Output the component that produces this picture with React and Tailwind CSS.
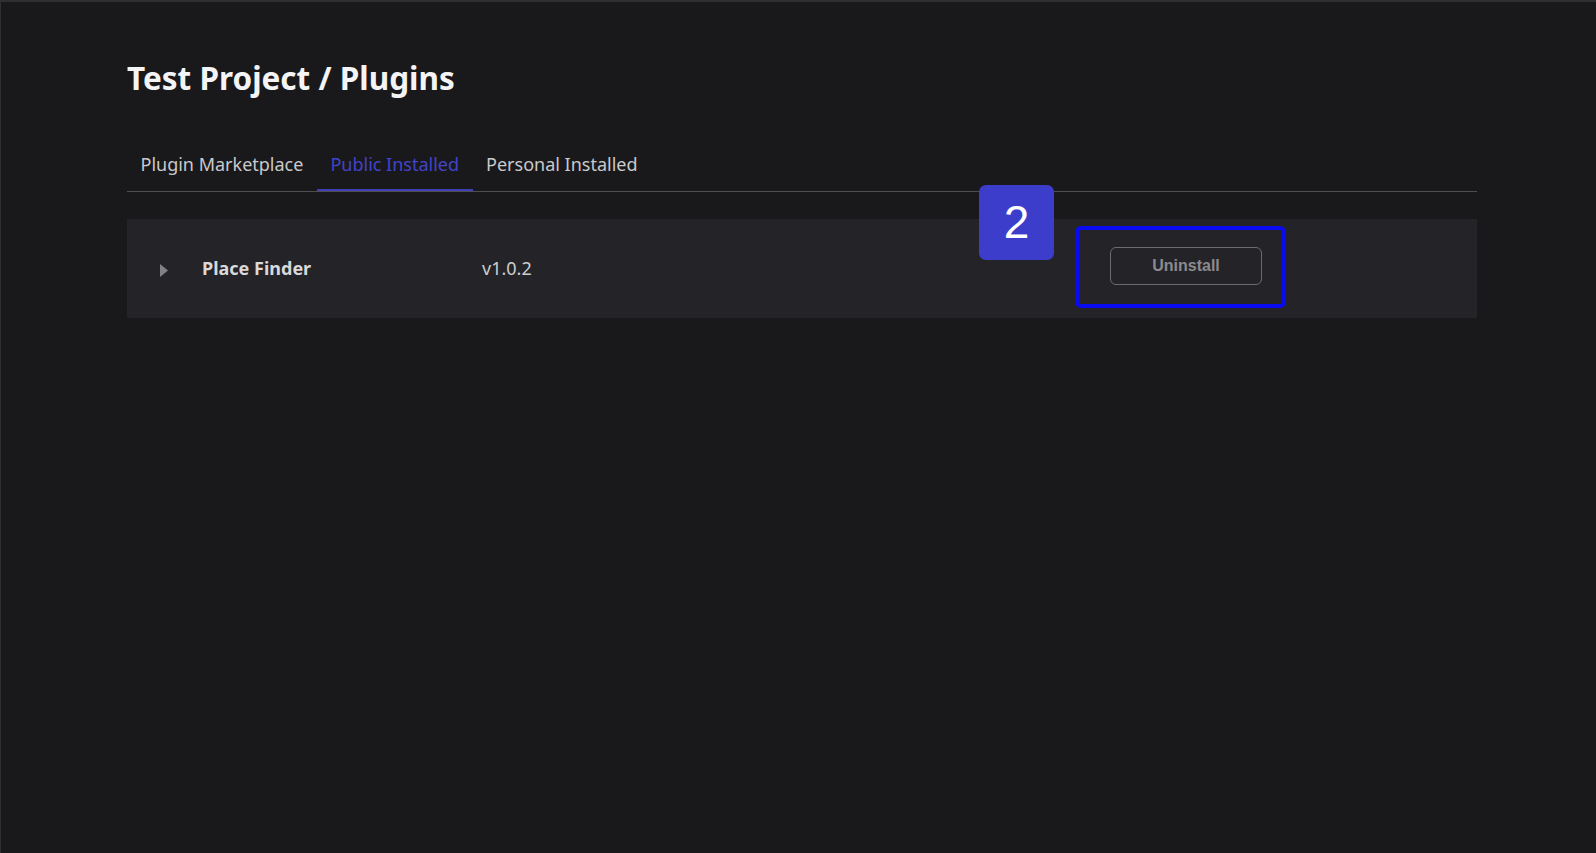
import { useState } from "react";

const tabs = ["Plugin Marketplace", "Public Installed", "Personal Installed"];

function App() {
  const [active, setActive] = useState(1);

  return (
    <div className="h-screen w-full overflow-hidden bg-[#19191b] border-t-2 border-l border-[#2f2f32] font-['Noto_Sans',sans-serif]">

      <div className="ml-[126px] w-[1350px] pt-[56px]">

        {/* HEADER */}

        <h1 className="text-[31.5px] leading-[40px] font-bold text-[#f4f4f6]">
          Test Project / Plugins
        </h1>

        {/* TABS */}

        <div className="mt-[45px] flex border-b border-[#4d4d52]">
          {tabs.map((tab, i) => (
            <button
              key={tab}
              onClick={() => setActive(i)}
              className={`px-[13.5px] pt-[8px] pb-[11px] text-[18px] leading-[27px] border-b-2 ${
                active === i
                  ? "text-[#4343c9] border-[#3f3fb8]"
                  : "text-[#c9c9cc] border-transparent"
              }`}
            >
              {tab}
            </button>
          ))}
        </div>

        {/* PLUGIN ROW */}

        <div className="mt-[27px] h-[99px] bg-[#242428] flex items-center pl-[33px]">

          <svg width="8" height="13" viewBox="0 0 8 13" className="mt-[3px]">
            <path d="M0 0 L8 6.5 L0 13 Z" fill="#828286" />
          </svg>

          <div className="ml-[34px] w-[280px] text-[18px] font-bold text-[#d9d9dc]">
            Place Finder
          </div>

          <div className="w-[628px] text-[18px] text-[#cdcdd0]">
            v1.0.2
          </div>

          <div className="relative mb-[5px]">

            {/* step badge */}
            <div className="absolute left-[-131px] top-[-62px] w-[75px] h-[75px] rounded-[7px] bg-[#3d3dcc] flex items-center justify-center text-white text-[46px] font-['Liberation_Sans',sans-serif]">
              2
            </div>

            {/* highlight */}
            <div className="absolute left-[-35px] top-[-21px] w-[211px] h-[82px] rounded-[6px] border-4 border-[#0b0bf2]" />

            <button className="w-[152px] h-[38px] rounded-[6px] border border-[#6c6c70] text-[16px] font-bold text-[#8b8b8f] font-['Liberation_Sans',sans-serif]">
              Uninstall
            </button>

          </div>

        </div>

      </div>

    </div>
  );
}

export default App;
